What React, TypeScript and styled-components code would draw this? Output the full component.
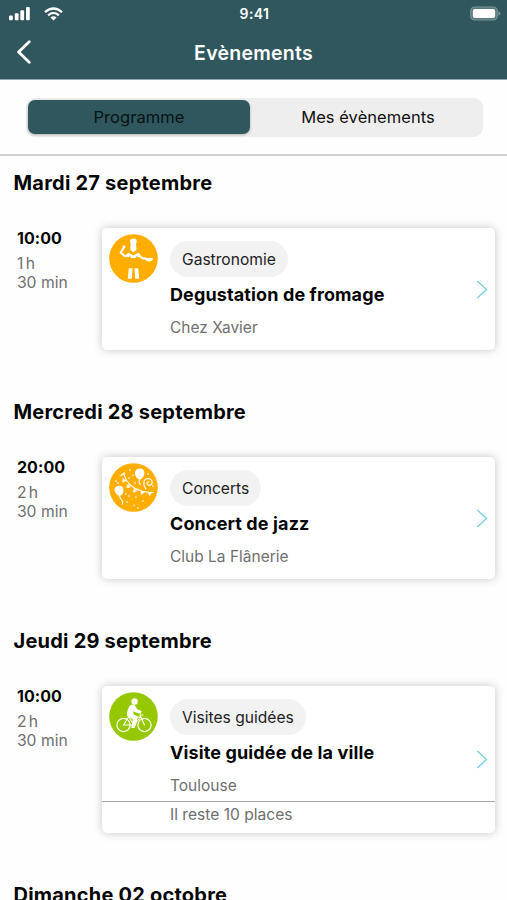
import React from "react";
import styled, { createGlobalStyle } from "styled-components";

const GlobalStyle = createGlobalStyle`
  * { box-sizing: border-box; }
  body { margin: 0; background: #fff; overflow: hidden; }
`;

const Screen = styled.main`
  width: 507px;
  height: 900px;
  overflow: hidden;
  background: #fefefe;
  color: #050505;
  font-family: Inter, "Liberation Sans", sans-serif;
`;

const Header = styled.header`
  height: 79.5px;
  background: #30575d;
  color: #fff;
  border-bottom: 1px solid #8fa9b4;
`;

const StatusBar = styled.div`
  display: grid;
  grid-template-columns: 1fr auto 1fr;
  align-items: center;
  height: 27px;
  padding: 0 6px 0 8px;
`;

const Signals = styled.div`
  display: flex;
  align-items: center;
  gap: 13px;
`;

const Clock = styled.span`
  font-size: 14px;
  font-weight: 600;
  letter-spacing: 0.4px;
`;

const Battery = styled.svg`
  justify-self: end;
`;

const NavBar = styled.nav`
  display: grid;
  grid-template-columns: 48px 1fr 48px;
  align-items: center;
  height: 51px;
`;

const BackButton = styled.button`
  display: flex;
  padding: 0 0 1px 16px;
  border: 0;
  background: none;
`;

const PageTitle = styled.h1`
  margin: 0;
  text-align: center;
  font-size: 19.5px;
  font-weight: 600;
  letter-spacing: 0.25px;
`;

const TabArea = styled.div`
  height: 76px;
  padding: 18px 24px 0 26px;
  border-bottom: 2.5px solid #d0d0d0;
`;

const Segmented = styled.div`
  display: grid;
  grid-template-columns: 222px 1fr;
  height: 39px;
  padding: 2px;
  border-radius: 9px;
  background: #eee;
`;

const Segment = styled.button<{ $active?: boolean }>`
  height: 34.5px;
  padding: 0 0 0 ${(p) => (p.$active ? 0 : 5)}px;
  border: 0;
  border-radius: 7px;
  background: ${(p) => (p.$active ? "#30575d" : "transparent")};
  box-shadow: ${(p) => (p.$active ? "0 1px 3px rgba(0,0,0,.25)" : "none")};
  color: ${(p) => (p.$active ? "#071215" : "#111")};
  font-family: inherit;
  font-size: 16.5px;
  letter-spacing: 0.05px;
`;

const Day = styled.section`
  padding: 14px 12px 34.5px 13.5px;
`;

const DayTitle = styled.h2`
  margin: 0 0 32.5px;
  font-size: 20px;
  line-height: 26px;
  font-weight: 700;
  letter-spacing: 0.22px;
`;

const EventRow = styled.div`
  display: grid;
  grid-template-columns: 88.5px 1fr;
`;

const TimeColumn = styled.div`
  padding: 1px 0 0 3.4px;
`;

const Start = styled.div`
  margin-bottom: 7px;
  font-size: 16px;
  line-height: 19px;
  font-weight: 700;
  letter-spacing: 0.1px;
`;

const Duration = styled.div<{ $tight?: boolean }>`
  color: #707070;
  font-size: 15.7px;
  line-height: 18.5px;
  word-spacing: ${(p) => (p.$tight ? "-2px" : "normal")};
`;

const Card = styled.article`
  border-radius: 5px;
  background: #fff;
  box-shadow: 0 0 10px rgba(0, 0, 0, 0.23);
`;

const CardBody = styled.div`
  display: grid;
  grid-template-columns: 61px 1fr 12px;
  height: 122px;
  padding: 6px 7px 0;
`;

const Details = styled.div`
  padding-top: 7px;
`;

const Category = styled.span`
  display: inline-flex;
  align-items: center;
  height: 36px;
  padding: 0 12px;
  border-radius: 18px;
  background: #f2f2f2;
  color: #222;
  font-size: 15.6px;
`;

const EventTitle = styled.h3`
  margin: 7px 0 12px;
  font-size: 18px;
  line-height: 22px;
  font-weight: 700;
  letter-spacing: 0.12px;
  white-space: nowrap;
`;

const Place = styled.div`
  color: #707070;
  font-size: 15.5px;
  line-height: 20px;
`;

const Arrow = styled.svg<{ $low?: boolean }>`
  margin-top: ${(p) => (p.$low ? 58 : 46)}px;
`;

const Remaining = styled.div`
  height: 32px;
  margin-top: -7px;
  padding: 3px 0 0 68px;
  border-top: 1px solid #a6a6a6;
  color: #707070;
  font-size: 15.6px;
  line-height: 20px;
`;

type Kind = "chef" | "party" | "bike";

const Chef = () => (
  <g fill="#fff">
    <path d="M21.3 5.8q3.2-2.4 6.2 0 .6 2-.5 4.2l.6 5.4-3.2 3-3.2-3 .6-5.4q-1.1-2-.5-4.2z" />
    <path d="M19.5 18.8l4.9 2.6 4.9-2.6 2 1.4-1.3 3.2-2.2-1.4-1 2h-4.8l-1-2-2.2 1.6-1.3-3.4z" />
    <path d="M20 21.3l-4 .8-4.3-3.4 3-5.2M28.7 20.7l5 3.6 4 .6" fill="none" stroke="#fff" strokeWidth="2.1" strokeLinejoin="round" />
    <circle cx="15" cy="12.8" r="1.5" />
    <path d="M35.5 24h8.5q-.3 3.6-3.8 3.6T35.5 24z" />
    <path d="M19.8 34.3h3.7l-.7 10.4h-4zM25.5 34.3h3.7l1 10.4h-4z" />
  </g>
);

const Party = () => (
  <g fill="none" stroke="#fff" strokeWidth="1.15" strokeLinecap="round" strokeLinejoin="round">
    <path d="M11.8 12.5l3.7-2.5M14.7 10C17 22.5 29 29.5 44 29.5" />
    <path d="M13.8 15.5l-.2 3.7 3.7-1.3zM18.8 21.3l-1.2 3.6 3.9-.8zM25 25.6l-1 3.8 4-1.4zM32 28.3l.2 3.4 3-2.1zM39 29.7l1.6 3.1 2.2-3z" fill="#fff" strokeWidth=".4" />
    <path d="M30.6 6q4.3.1 4.2 4.1t-4 6q-4.3-2-4.2-5.9t4-4.2zM9.8 23.3q4-.3 4.1 3.7t-3.4 5.6Q6.6 30.8 6.2 27.3t3.6-4z" fill="#fff" />
    <path d="M30.7 16.2q-1.7 3 .8 5.5M10.5 32.5q.3 3 2 4.3t1 4.3M37 26c-3-4-3.5-10 2-10.5 5 0 5.5 6.8 1.5 6.8-3 0-3-3.5-.8-3.5" />
    <g fill="#fff" stroke="none">
      {[[21,7],[24,12],[20,15],[39,11],[7,18],[9,20],[26,20],[44,23],[17,31],[20,33],[27,34],[34,38],[18,39],[25,42],[29,45]].map(([x, y]) => (
        <circle key={`${x}-${y}`} cx={x} cy={y} r=".85" />
      ))}
    </g>
  </g>
);

const Bike = () => (
  <g fill="none" stroke="#fff" strokeLinecap="round" strokeLinejoin="round">
    <circle cx="14.5" cy="33" r="6.6" strokeWidth="1.2" />
    <circle cx="35.5" cy="33" r="6.6" strokeWidth="1.2" />
    <path d="M14.5 33l5-8h12.3M20 25l4.5 8 7.3-8M35.5 33l-4.5-10h3M14.5 33h10" strokeWidth="1.1" />
    <circle cx="25.6" cy="9.5" r="3.2" fill="#fff" stroke="none" />
    <path d="M22 13.5q3.2-1 4.1 1.4l1.7 3 4.2 1.5-.6 1.7-5.6-1.6-1.6-2-.6 5 4.6 2.2-1.4 6.8-1.5 3.9h-2.3l1.4-8.4-5.8-3.5q0-6.2 3.4-10z" fill="#fff" strokeWidth="1.2" />
  </g>
);

const EventIcon = ({ kind }: { kind: Kind }) => (
  <svg width="49" height="49" viewBox="0 0 49 49">
    <circle cx="24.5" cy="24.5" r="24.3" fill={kind === "bike" ? "#96c800" : "#ffae00"} />
    {kind === "chef" && <Chef />}
    {kind === "party" && <Party />}
    {kind === "bike" && <Bike />}
  </svg>
);

interface EventItem {
  day: string;
  start: string;
  hours: string;
  kind: Kind;
  category: string;
  title: string;
  place: string;
  remaining?: string;
}

const events: EventItem[] = [
  { day: "Mardi 27 septembre", start: "10:00", hours: "1 h", kind: "chef", category: "Gastronomie", title: "Degustation de fromage", place: "Chez Xavier" },
  { day: "Mercredi 28 septembre", start: "20:00", hours: "2 h", kind: "party", category: "Concerts", title: "Concert de jazz", place: "Club La Flânerie" },
  { day: "Jeudi 29 septembre", start: "10:00", hours: "2 h", kind: "bike", category: "Visites guidées", title: "Visite guidée de la ville", place: "Toulouse", remaining: "Il reste 10 places" },
];

const EventDay = ({ event }: { event: EventItem }) => (
  <Day>
    <DayTitle>{event.day}</DayTitle>
    <EventRow>
      <TimeColumn>
        <Start>{event.start}</Start>
        <Duration $tight>{event.hours}</Duration>
        <Duration>30 min</Duration>
      </TimeColumn>
      <Card>
        <CardBody>
          <EventIcon kind={event.kind} />
          <Details>
            <Category>{event.category}</Category>
            <EventTitle>{event.title}</EventTitle>
            <Place>{event.place}</Place>
          </Details>
          <Arrow $low={!!event.remaining} width="12" height="19" viewBox="0 0 12 19">
            <path d="M1.3 1l9.2 8.5-9.2 8.5" fill="none" stroke="#83cfe4" strokeWidth="1.5" />
          </Arrow>
        </CardBody>
        {event.remaining && <Remaining>{event.remaining}</Remaining>}
      </Card>
    </EventRow>
  </Day>
);

export default function App() {
  return (
    <Screen>
      <GlobalStyle />
      <Header>
        <StatusBar>
          <Signals>
            <svg width="23" height="15" viewBox="0 0 23 15" fill="#fff">
              <rect x="1" y="9.5" width="3.8" height="4.7" rx="1" />
              <rect x="6.8" y="7.2" width="3.8" height="7" rx="1" />
              <rect x="12.3" y="4.3" width="3.8" height="9.9" rx="1" />
              <rect x="18" y="1" width="3.8" height="13.2" rx="1" />
            </svg>
            <svg width="19" height="14" viewBox="0 0 19 14" fill="none" stroke="#fff" strokeWidth="2.3">
              <path d="M1 5.2q8.5-7.4 17 0M4.1 8.3q5.4-4.8 10.8 0" />
              <path d="M6.4 10.4q3.1-2.5 6.2 0l-3.1 3.2z" fill="#fff" stroke="none" />
            </svg>
          </Signals>
          <Clock>9:41</Clock>
          <Battery width="31" height="15" viewBox="0 0 31 15">
            <rect x=".8" y="1" width="26.4" height="13" rx="3.8" fill="#58777c" stroke="#78959a" strokeWidth="1.2" />
            <rect x="2.8" y="3" width="22.4" height="9" rx="2" fill="#fff" />
            <path d="M28.4 5.2q2.2.7 2.2 2.3t-2.2 2.3z" fill="#78959a" />
          </Battery>
        </StatusBar>
        <NavBar>
          <BackButton aria-label="Retour">
            <svg width="16" height="24" viewBox="0 0 16 24">
              <path d="M13.2 1.8L2.6 12l10.6 10.2" fill="none" stroke="#fff" strokeWidth="2.9" strokeLinecap="round" strokeLinejoin="round" />
            </svg>
          </BackButton>
          <PageTitle>Evènements</PageTitle>
        </NavBar>
      </Header>
      <TabArea>
        <Segmented>
          <Segment $active>Programme</Segment>
          <Segment>Mes évènements</Segment>
        </Segmented>
      </TabArea>
      {events.map((event) => <EventDay key={event.day} event={event} />)}
      <Day><DayTitle>Dimanche 02 octobre</DayTitle></Day>
    </Screen>
  );
}
